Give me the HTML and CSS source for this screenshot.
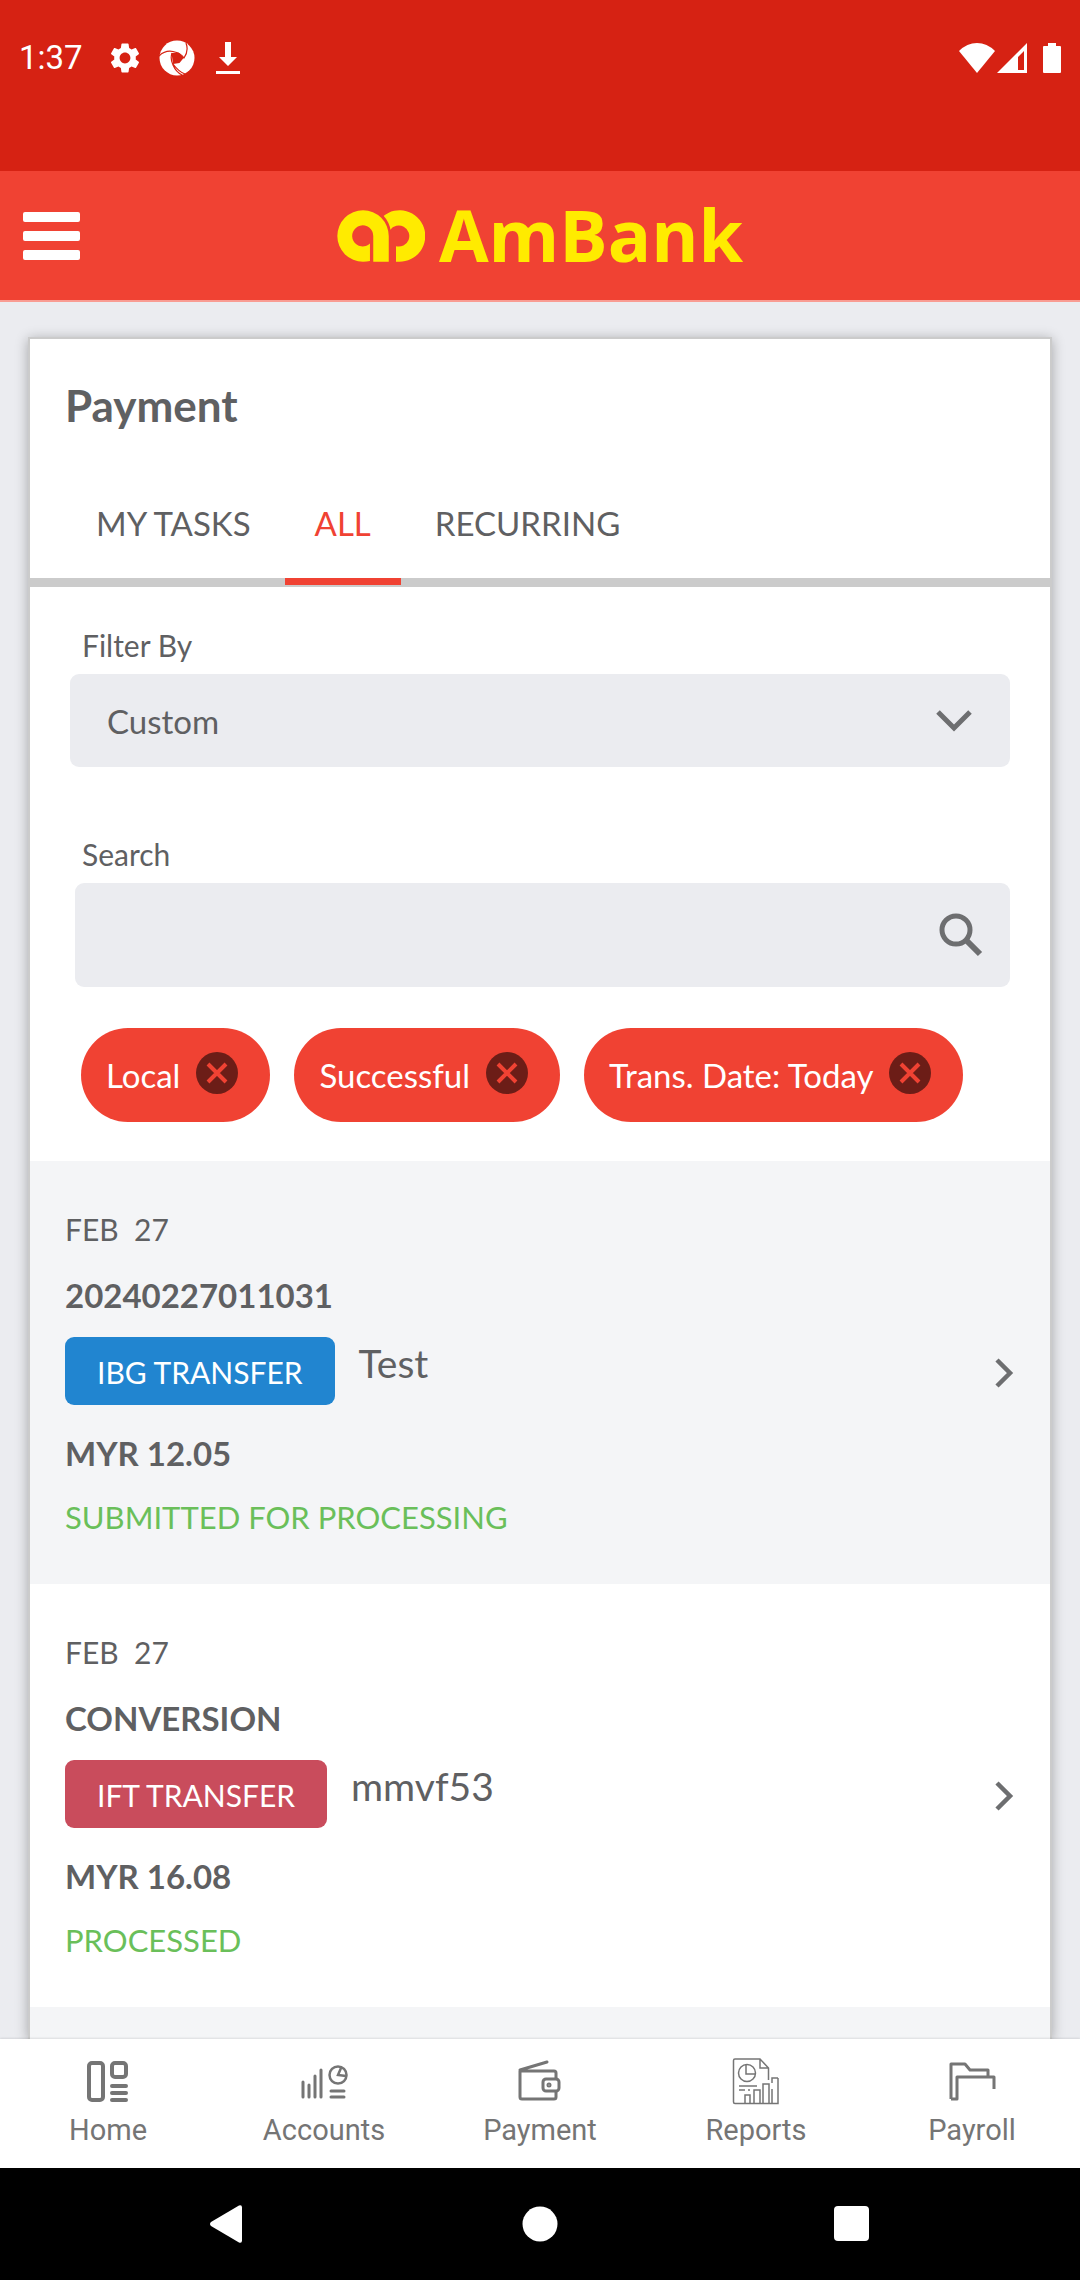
FILE: index.html
```html
<!DOCTYPE html>
<html lang="en">
<head>
<meta charset="utf-8">
<meta name="viewport" content="width=device-width, initial-scale=1">
<title>AmBank - Payment</title>
<link rel="stylesheet" href="styles.css">
</head>
<body>
<div class="status-bar">
  <div class="status-left">
    <span class="clock">1:37</span>
    <svg class="gear" width="36" height="36" viewBox="0 0 24 24" fill="#fff" aria-hidden="true"><path d="M19.14 12.94c.04-.3.06-.61.06-.94 0-.32-.02-.64-.07-.94l2.03-1.58c.18-.14.23-.41.12-.61l-1.92-3.32c-.12-.22-.37-.29-.59-.22l-2.39.96c-.5-.38-1.03-.7-1.62-.94l-.36-2.54c-.04-.24-.24-.41-.48-.41h-3.84c-.24 0-.43.17-.47.41l-.36 2.54c-.59.24-1.13.57-1.62.94l-2.39-.96c-.22-.08-.47 0-.59.22L2.74 8.87c-.12.21-.08.47.12.61l2.03 1.58c-.05.3-.09.63-.09.94s.02.64.07.94l-2.03 1.58c-.18.14-.23.41-.12.61l1.92 3.32c.12.22.37.29.59.22l2.39-.96c.5.38 1.03.7 1.62.94l.36 2.54c.05.24.24.41.48.41h3.84c.24 0 .44-.17.47-.41l.36-2.54c.59-.24 1.13-.56 1.62-.94l2.39.96c.22.08.47 0 .59-.22l1.92-3.32c.12-.22.07-.47-.12-.61l-2.01-1.58zM12 15.6c-1.98 0-3.6-1.62-3.6-3.6s1.62-3.6 3.6-3.6 3.6 1.62 3.6 3.6-1.62 3.6-3.6 3.6z"/></svg>
    <svg width="36" height="36" viewBox="0 0 36 36" aria-hidden="true"><circle cx="18" cy="18" r="17.500" fill="#fff"/><path d="M12.500 13 19.500 12.500 25 17.500 20.500 23 14 24Z" fill="#d62213"/><path d="M0 16Q6 10 14 11.500 22 13 25 18Q30 11 27 3M14 24Q20 32 26 34M13 13Q11 19 14 25 17 32 23 35" fill="none" stroke="#d62213" stroke-width="1.200"/></svg>
    <svg width="24" height="32" viewBox="0 0 24 32" fill="#fff" aria-hidden="true"><path d="M9 0h6v15h6l-9 9-9-9h6zM0 29h24v3H0z"/></svg>
  </div>
  <div class="status-right">
    <svg width="36" height="30" viewBox="0 0 36 30" fill="#fff" aria-hidden="true"><path d="M18 30 0 8Q8 0 18 0T36 8Z"/></svg>
    <svg width="30" height="30" viewBox="0 0 30 30" fill="#fff" aria-hidden="true"><path fill-rule="evenodd" d="M30 0v30H0zM27 8l-6 6v13h6z"/></svg>
    <svg class="battery" width="18" height="30" viewBox="0 0 18 30" fill="#fff" aria-hidden="true"><path d="M5 0h8v3h4q1 0 1 1v25q0 1-1 1H1q-1 0-1-1V4q0-1 1-1h4z"/></svg>
  </div>
</div>

<header class="app-header">
  <button class="menu" type="button" aria-label="Menu">
    <svg width="57" height="48" viewBox="0 0 57 48" fill="#fff"><rect width="57" height="10" rx="2"/><rect y="19" width="57" height="10" rx="2"/><rect y="38" width="57" height="10" rx="2"/></svg>
  </button>
  <a class="brand" href="#home">
    <svg width="88" height="52" viewBox="50 62 267 156" fill="#ffeb00" aria-hidden="true"><path d="M150 216Q140 218 129 218A78 78 0 1 1 207 140V218H160V140A32 32 0 1 0 150 163Z"/><path d="M190 80A78 78 0 1 1 238 218H229V171A32 32 0 1 0 211 122Q205 98 190 80Z"/><path d="M188 79Q208 100 211 128" fill="none" stroke="#f04233" stroke-width="5"/></svg>
    <span class="brand-name">AmBank</span>
  </a>
</header>

<main class="content">
  <section class="card">
    <h1 class="title">Payment</h1>
    <nav class="tabs" aria-label="Payment lists">
      <a class="tab" href="#tasks">MY TASKS</a>
      <a class="tab active" href="#all" aria-current="page">ALL</a>
      <a class="tab" href="#recurring">RECURRING</a>
    </nav>

    <form class="filters">
      <label class="label" for="filter">Filter By</label>
      <div class="field">
        <select id="filter" class="control select"><option>Custom</option></select>
        <svg class="field-icon chevron" width="36" height="24" viewBox="0 0 36 24" fill="none" stroke="#6d6e70" stroke-width="5" aria-hidden="true"><path d="M2 3 18 19 34 3"/></svg>
      </div>
      <label class="label search-label" for="search">Search</label>
      <div class="field search-field">
        <input id="search" class="control search" type="text">
        <svg class="field-icon magnifier" width="44" height="44" viewBox="0 0 44 44" fill="none" stroke="#6d6e70" stroke-width="5" aria-hidden="true"><circle cx="17" cy="17" r="14"/><path d="M27 27 41 41" stroke-width="6"/></svg>
      </div>
      <div class="chips">
        <span class="chip">Local <button class="remove" type="button" aria-label="Remove Local"><svg width="42" height="42" viewBox="0 0 42 42"><circle cx="21" cy="21" r="21" fill="#6c1d17"/><path d="M12 12 30 30M30 12 12 30" stroke="#f04233" stroke-width="4"/></svg></button></span>
        <span class="chip">Successful <button class="remove" type="button" aria-label="Remove Successful"><svg width="42" height="42" viewBox="0 0 42 42"><circle cx="21" cy="21" r="21" fill="#6c1d17"/><path d="M12 12 30 30M30 12 12 30" stroke="#f04233" stroke-width="4"/></svg></button></span>
        <span class="chip">Trans. Date: Today <button class="remove" type="button" aria-label="Remove Trans. Date"><svg width="42" height="42" viewBox="0 0 42 42"><circle cx="21" cy="21" r="21" fill="#6c1d17"/><path d="M12 12 30 30M30 12 12 30" stroke="#f04233" stroke-width="4"/></svg></button></span>
      </div>
    </form>

    <ul class="list">
      <li>
        <a class="row" href="#t1">
          <span class="details">
            <span class="date">FEB&nbsp; 27</span>
            <strong class="ref">20240227011031</strong>
            <span class="kind"><span class="badge ibg">IBG TRANSFER</span><span class="payee">Test</span></span>
            <strong class="amount">MYR 12.05</strong>
            <span class="state">SUBMITTED FOR PROCESSING</span>
          </span>
          <svg width="20" height="30" viewBox="0 0 20 30" fill="none" stroke="#6d6e70" stroke-width="4.500" aria-hidden="true"><path d="M3 2 16 15 3 28"/></svg>
        </a>
      </li>
      <li>
        <a class="row" href="#t2">
          <span class="details">
            <span class="date">FEB&nbsp; 27</span>
            <strong class="ref">CONVERSION</strong>
            <span class="kind"><span class="badge ift">IFT TRANSFER</span><span class="payee">mmvf53</span></span>
            <strong class="amount">MYR 16.08</strong>
            <span class="state">PROCESSED</span>
          </span>
          <svg width="20" height="30" viewBox="0 0 20 30" fill="none" stroke="#6d6e70" stroke-width="4.500" aria-hidden="true"><path d="M3 2 16 15 3 28"/></svg>
        </a>
      </li>
    </ul>
    <div class="list-rest"></div>
  </section>
</main>

<nav class="bottom-nav" aria-label="Main">
  <a href="#home"><svg width="48" height="48" viewBox="0 0 48 48" fill="none" stroke="#757575" stroke-width="4" aria-hidden="true"><rect x="5" y="5" width="14" height="37" rx="3"/><rect x="28" y="5" width="14" height="14" rx="3"/><path d="M28 28H42M28 35H42M28 42H42" stroke-linecap="round"/></svg>Home</a>
  <a href="#accounts"><svg width="48" height="48" viewBox="0 0 48 48" fill="none" stroke="#757575" stroke-width="3" stroke-linecap="round" aria-hidden="true"><path d="M3 24V39M9 27V39M15 18V39M21 12V39M31 33H44M31 39H44"/><circle cx="38" cy="17" r="8.500" stroke-width="2.500"/><path d="M41 10 38 17 46 18" stroke-width="2.500"/></svg>Accounts</a>
  <a href="#payment"><svg width="48" height="48" viewBox="0 0 48 48" fill="none" stroke="#757575" stroke-width="3" stroke-linejoin="round" stroke-linecap="round" aria-hidden="true"><path d="M40 20V15Q40 13 38 13H4V39Q4 41 6 41H38Q40 41 40 39V34M4 12 31 4"/><rect x="27" y="21" width="16" height="12" rx="3"/><circle cx="33" cy="27" r="1"/></svg>Payment</a>
  <a href="#reports"><svg width="48" height="48" viewBox="0 0 48 48" fill="none" stroke="#757575" stroke-width="1.500" aria-hidden="true"><path d="M46 20V45.500H3Q1.500 45.500 1.500 44V2.500Q1.500 1 3 1H28L36.500 10V22M28 1V10H36.500M40 25V20H46M40 31V45M31 45V26H37V45M22 45V32H28V45M13 45V37H18V45M7 28H25M7 32H13M16 32H18"/><circle cx="15" cy="15" r="8.500"/><path d="M14 6V16H24"/></svg>Reports</a>
  <a href="#payroll"><svg width="48" height="48" viewBox="0 0 48 48" fill="none" stroke="#757575" stroke-width="3" stroke-linejoin="round" aria-hidden="true"><path d="M3 41V6H17L22 12H40V18M3 41H9V19H46V31"/></svg>Payroll</a>
</nav>

<div class="system-nav">
  <button type="button" aria-label="Back"><svg width="36" height="38" viewBox="0 0 36 38" fill="#fff"><path d="M1 17 29 .500q3-1 3 2v33q0 3-3 2L1 21q-2-2 0-4z"/></svg></button>
  <button type="button" aria-label="Home"><svg width="36" height="36" viewBox="0 0 36 36" fill="#fff"><circle cx="18" cy="18" r="17.500"/></svg></button>
  <button type="button" aria-label="Recent apps"><svg width="36" height="36" viewBox="0 0 36 36" fill="#fff"><rect width="35" height="35" rx="4"/></svg></button>
</div>
</body>
</html>
```
FILE: styles.css
```css
* { box-sizing: border-box; }

body {
  margin: 0;
  height: 100vh;
  display: flex;
  flex-direction: column;
  background: #ebecf0;
  color: #5f6062;
  font-family: Lato, sans-serif;
  font-size: 33px;
  line-height: 40px;
}

a { color: inherit; text-decoration: none; }
button { padding: 0; border: 0; background: none; font: inherit; cursor: pointer; }
svg { display: block; flex: none; }

/* Phone status bar */
.status-bar {
  display: flex;
  justify-content: space-between;
  height: 171px;
  padding: 38px 19px 0;
  background: #d62213;
  color: #fff;
  font-family: Roboto, sans-serif;
}
.status-left, .status-right { display: flex; align-items: center; height: 40px; }
.clock { margin-right: 24px; }
.gear { margin-right: 16px; }
.status-left svg:last-child { margin-left: 21px; }
.status-right { gap: 2px; }
.battery { margin-left: 14px; }

/* App header */
.app-header {
  display: grid;
  grid-template-columns: 1fr auto 1fr;
  align-items: center;
  height: 131px;
  padding: 0 23px;
  background: #f04233;
  border-bottom: 2px solid #f99c93;
}
.menu { justify-self: start; }
.brand { display: flex; align-items: center; gap: 14px; color: #ffeb00; }
.brand-name { padding-bottom: 4px; font: bold 72px/100px "Open Sans", sans-serif; }

/* Card */
.content { flex: 1; min-height: 0; overflow: hidden; padding: 35px 28px 0; }
.card {
  display: flex;
  flex-direction: column;
  height: 100%;
  background: #fff;
  border: 2px solid #cbcbcb;
  border-bottom: 0;
  box-shadow: 0 2px 12px rgba(0, 0, 0, .3);
}
.title { margin: 0; padding: 38px 35px 0; font-size: 44px; line-height: 56px; }
.tabs {
  display: flex;
  gap: 4px;
  height: 154px;
  padding: 62px 36px 0;
  border-bottom: 9px solid #cbcbcb;
}
.tab { height: 90px; padding: 8px 30px 0; }
.tab.active { color: #f04233; border-bottom: 7px solid #f04233; }

/* Filters */
.filters { padding: 38px 40px 39px; }
.label { display: block; margin-left: 12px; font-size: 30px; line-height: 40px; }
.search-label { margin-top: 67px; }
.field { position: relative; margin-top: 9px; }
.search-field { margin-left: 5px; }
.control {
  display: block;
  width: 100%;
  border: 0;
  border-radius: 9px;
  background: #ebecf0;
  color: inherit;
  font: inherit;
  appearance: none;
}
.select { height: 93px; padding: 0 37px; }
.search { height: 104px; padding: 0 100px 0 33px; }
.field-icon { position: absolute; top: 50%; transform: translateY(-50%); pointer-events: none; }
.chevron { right: 38px; }
.magnifier { right: 27px; }
.chips { display: flex; gap: 24px; margin: 41px 0 0 11px; }
.chip {
  display: flex;
  align-items: center;
  gap: 16px;
  height: 94px;
  padding: 0 32px 0 25px;
  border-radius: 47px;
  background: #f04233;
  color: #fff;
}
.remove { margin-bottom: 5px; }

/* Transactions */
.list { margin: 0; padding: 0; list-style: none; }
.list li:nth-child(odd), .list-rest { background: #f4f5f7; }
.list-rest { flex: 1; }
.row {
  display: flex;
  justify-content: space-between;
  align-items: center;
  height: 423px;
  padding: 0 36px 0 35px;
}
.details { display: flex; flex-direction: column; }
.date, .badge { font-size: 30px; }
.ref { margin-top: 26px; }
.kind { display: flex; gap: 24px; margin-top: 22px; }
.badge {
  height: 68px;
  padding: 0 32px;
  border-radius: 9px;
  color: #fff;
  line-height: 70px;
}
.ibg { background: #2185d0; }
.ift { background: #c94c5c; }
.payee { font-size: 39px; line-height: 52px; }
.amount { margin-top: 28px; }
.state { margin-top: 24px; color: #6abf5a; font-size: 31px; }

/* Bottom navigation */
.bottom-nav {
  display: grid;
  grid-template-columns: repeat(5, 1fr);
  height: 129px;
  padding-top: 19px;
  background: #fff;
  box-shadow: 0 -1px 2px rgba(0, 0, 0, .1);
  color: #757575;
  font: 29px/40px Roboto, sans-serif;
  position: relative;
}
.bottom-nav a { display: flex; flex-direction: column; align-items: center; gap: 4px; }

.system-nav {
  display: flex;
  justify-content: center;
  gap: 276px;
  align-items: center;
  height: 112px;
  background: #000;
}
```
